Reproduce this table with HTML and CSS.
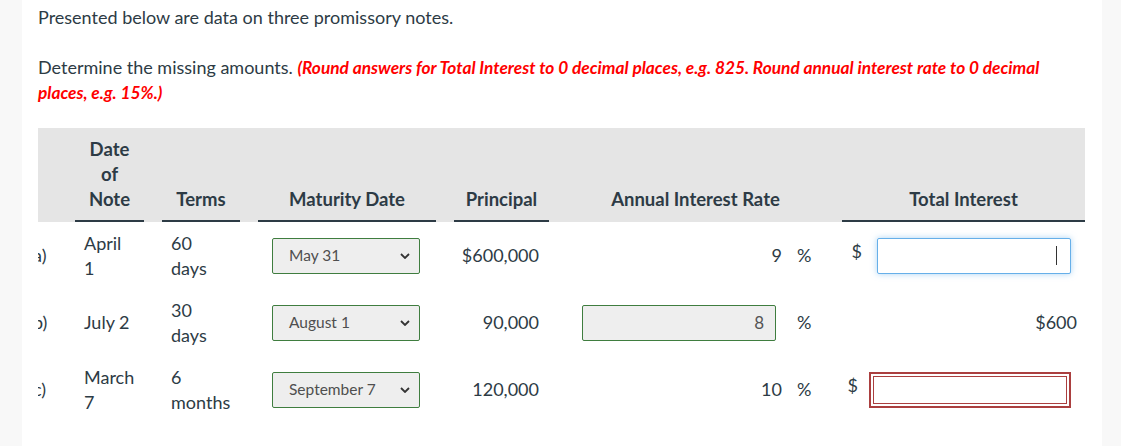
FILE: index.html
```html
<!DOCTYPE html>
<html lang="en">
<head>
<meta charset="utf-8">
<title>Promissory notes</title>
<link rel="stylesheet" href="styles.css">
</head>
<body>
<div class="page">
  <main class="panel">
    <p class="intro">Presented below are data on three promissory notes.</p>
    <p class="task">Determine the missing amounts. <em class="hint">(Round answers for Total Interest to 0 decimal places, e.g. 825. Round annual interest rate to 0 decimal places, e.g. 15%.)</em></p>

    <div class="notes">
      <div class="head">
        <div class="th"></div>
        <div class="th ul">Date<br>of<br>Note</div>
        <div class="th ul">Terms</div>
        <div class="th ul">Maturity Date</div>
        <div class="th ul">Principal</div>
        <div class="th">Annual Interest Rate</div>
        <div class="th ul">Total Interest</div>
      </div>

      <div class="row">
        <div class="lbl"><span>a)</span></div>
        <div class="date">April<br>1</div>
        <div class="terms">60<br>days</div>
        <div class="mat"><div class="select"><span>May 31</span><svg class="chev" width="10" height="6" viewBox="0 0 10 6"><polyline points="1,1 5,5 9,1" fill="none" stroke="#333" stroke-width="1.8"/></svg></div></div>
        <div class="prin">$600,000</div>
        <div class="rate"><div class="rate-val">9</div><span class="pct">%</span></div>
        <div class="total"><span class="cur">$</span><div class="field focus"></div></div>
      </div>

      <div class="row">
        <div class="lbl"><span>b)</span></div>
        <div class="date">July 2</div>
        <div class="terms">30<br>days</div>
        <div class="mat"><div class="select"><span>August 1</span><svg class="chev" width="10" height="6" viewBox="0 0 10 6"><polyline points="1,1 5,5 9,1" fill="none" stroke="#333" stroke-width="1.8"/></svg></div></div>
        <div class="prin">90,000</div>
        <div class="rate"><div class="rate-val"><div class="field filled">8</div></div><span class="pct">%</span></div>
        <div class="total total-text">$600</div>
      </div>

      <div class="row">
        <div class="lbl"><span>c)</span></div>
        <div class="date">March<br>7</div>
        <div class="terms">6<br>months</div>
        <div class="mat"><div class="select"><span>September 7</span><svg class="chev" width="10" height="6" viewBox="0 0 10 6"><polyline points="1,1 5,5 9,1" fill="none" stroke="#333" stroke-width="1.8"/></svg></div></div>
        <div class="prin">120,000</div>
        <div class="rate"><div class="rate-val">10</div><span class="pct">%</span></div>
        <div class="total"><span class="cur cur-err">$</span><div class="field error"></div></div>
      </div>
    </div>
  </main>
</div>
</body>
</html>
```

FILE: styles.css
```css
* { box-sizing: border-box; }

html, body {
  margin: 0;
  padding: 0;
  height: 100%;
}

body {
  background: #f8f8f8;
  font-family: "Lato", "Liberation Sans", sans-serif;
  font-size: 18px;
  line-height: 24px;
  color: #2d3b45;
}

.page {
  height: 100%;
  padding-left: 22px;
}

.panel {
  width: 1080px;
  min-height: 100%;
  background: #fff;
  padding: 5px 17px 0 16px;
}

.intro {
  margin: 0 0 26px;
}

.task {
  margin: 0 0 23px;
}

.hint {
  color: #ff0000;
  font-weight: 700;
  font-style: italic;
  font-size: 17.3px;
}

.notes {
  width: 1047px;
}

.head,
.row {
  display: grid;
  grid-template-columns: 19px 69px 78px 178px 95px 257px 243px;
  column-gap: 18px;
}

.head {
  background: #e5e5e5;
  align-items: end;
}

.th {
  font-weight: 700;
  font-size: 18.5px;
  text-align: center;
  line-height: 25px;
  padding: 9px 0 8px;
  border-bottom: 2px solid transparent;
}

.th.ul {
  border-bottom-color: #2d3b45;
}

.row {
  height: 67px;
  align-items: center;
  line-height: 25px;
}

.lbl {
  overflow: hidden;
  white-space: nowrap;
}

.lbl span {
  display: inline-block;
  margin-left: -5px;
}

.date,
.terms {
  padding-left: 9px;
}

.mat {
  padding-left: 14px;
}

.select {
  width: 148px;
  height: 36px;
  display: flex;
  align-items: center;
  justify-content: space-between;
  padding: 0 9px 0 16px;
  background: #eeeeee;
  border: 1px solid #3f7d3f;
  border-radius: 2px;
  color: #4f4f4f;
  font-size: 15.5px;
}

.chev {
  display: block;
}

.prin {
  text-align: right;
  padding-right: 10px;
}

.rate {
  display: flex;
  align-items: center;
  padding-left: 15px;
}

.rate-val {
  width: 200px;
  text-align: right;
}

.pct {
  margin-left: 15px;
}

.field {
  height: 36px;
  border-radius: 2px;
}

.field.filled {
  width: 194px;
  background: #eeeeee;
  border: 1px solid #3f7d3f;
  color: #555;
  padding-right: 11px;
  line-height: 34px;
  text-align: right;
  font-size: 17px;
}

.total {
  display: flex;
  align-items: center;
  justify-content: flex-end;
  padding-right: 14px;
}

.cur {
  margin-right: 15px;
  margin-bottom: 8px;
}

.cur-err {
  margin-right: 11px;
}

.field.focus {
  width: 194px;
  background: #fff;
  border: 1px solid #66afe9;
  box-shadow: 0 0 6px rgba(102, 175, 233, 0.55);
  display: flex;
  align-items: center;
  justify-content: flex-end;
  padding-right: 13px;
}

.field.focus::after {
  content: "";
  width: 1px;
  height: 19px;
  background: #333;
}

.field.error {
  width: 202px;
  background: #fff;
  border: 2px solid #ab3f3f;
  box-shadow: inset 0 0 0 2px #fff, inset 0 0 0 3px #ab3f3f;
  border-radius: 0;
}

.total-text {
  padding-right: 8px;
}
```
